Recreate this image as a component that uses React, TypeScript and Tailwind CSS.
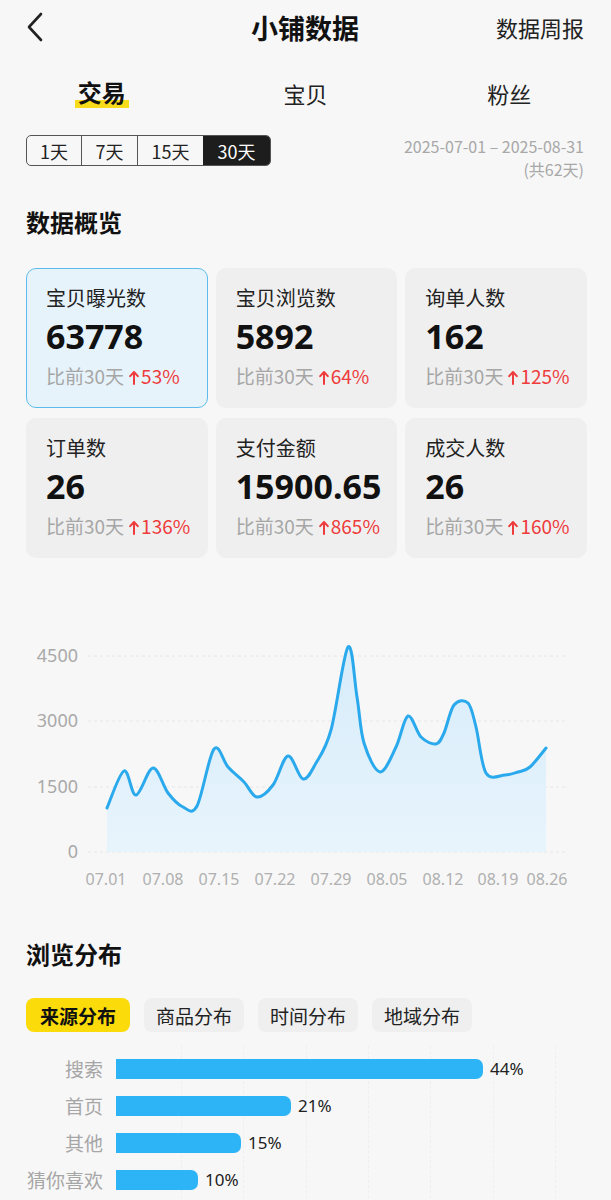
import React from "react";

const CJK = '"Noto Sans CJK SC", "Noto Sans", sans-serif';
const NUM = '"Noto Sans", "Noto Sans CJK SC", sans-serif';

const stats = [
  { label: "宝贝曝光数", value: "63778", pct: "53%", active: true },
  { label: "宝贝浏览数", value: "5892", pct: "64%" },
  { label: "询单人数", value: "162", pct: "125%" },
  { label: "订单数", value: "26", pct: "136%" },
  { label: "支付金额", value: "15900.65", pct: "865%" },
  { label: "成交人数", value: "26", pct: "160%" },
];

// points in page coordinates
const pts: [number, number][] = [
  [107, 808], [124, 771], [136, 795], [153, 768], [168, 793], [183, 807],
  [197, 806], [214, 749], [228, 767], [244, 782], [257, 797], [273, 785],
  [288, 756], [303, 779], [316, 763], [331, 730], [348, 647], [357, 697],
  [364, 743], [380, 772], [396, 747], [408, 716], [421, 737], [436, 744],
  [444, 733], [454, 705], [468, 703], [476, 727], [486, 773], [505, 775],
  [518, 772], [530, 767], [546, 748],
];

function smoothPath(p: [number, number][]) {
  let d = `M${p[0][0]},${p[0][1]}`;
  for (let i = 0; i < p.length - 1; i++) {
    const p0 = p[i - 1] || p[i];
    const p1 = p[i];
    const p2 = p[i + 1];
    const p3 = p[i + 2] || p2;
    const c1x = p1[0] + (p2[0] - p0[0]) / 6;
    const c1y = p1[1] + (p2[1] - p0[1]) / 6;
    const c2x = p2[0] - (p3[0] - p1[0]) / 6;
    const c2y = p2[1] - (p3[1] - p1[1]) / 6;
    d += ` C${c1x},${c1y} ${c2x},${c2y} ${p2[0]},${p2[1]}`;
  }
  return d;
}

const sources = [
  { label: "搜索", pct: 44, w: 367 },
  { label: "首页", pct: 21, w: 175 },
  { label: "其他", pct: 15, w: 125 },
  { label: "猜你喜欢", pct: 10, w: 82 },
];

function UpArrow() {
  return (
    <svg width="10" height="15" viewBox="0 0 10 15" className="inline-block ml-[5px] mr-[2px] mb-[2px]">
      <path
        d="M5 14 V2.5 M1.2 6.2 L5 2 L8.8 6.2"
        fill="none"
        stroke="#ee3b3b"
        strokeWidth="2"
        strokeLinecap="round"
        strokeLinejoin="round"
      />
    </svg>
  );
}

function Chart() {
  const line = smoothPath(pts);
  const area = `${line} L546,852 L107,852 Z`;
  const yTicks = [
    { v: "4500", y: 656 },
    { v: "3000", y: 721 },
    { v: "1500", y: 787 },
    { v: "0", y: 852 },
  ];
  const xTicks = [
    ["07.01", 106], ["07.08", 163], ["07.15", 219], ["07.22", 275],
    ["07.29", 331], ["08.05", 387], ["08.12", 443], ["08.19", 498], ["08.26", 547],
  ] as const;
  return (
    <svg
      className="block"
      width="611"
      height="342"
      viewBox="0 558 611 342"
      style={{ fontFamily: NUM }}
    >
      <defs>
        <linearGradient id="fill" x1="0" y1="0" x2="0" y2="1">
          <stop offset="0%" stopColor="#d6ecfa" />
          <stop offset="100%" stopColor="#e8f4fc" />
        </linearGradient>
      </defs>
      {yTicks.map((t) => (
        <g key={t.v}>
          <line
            x1="88"
            x2="567"
            y1={t.y}
            y2={t.y}
            stroke="#e6e6e6"
            strokeWidth="1"
            strokeDasharray="3 3"
          />
          <text
            x="78"
            y={t.y + 6}
            textAnchor="end"
            fontSize="18"
            fill="#a9a9a9"
          >
            {t.v}
          </text>
        </g>
      ))}
      <path d={area} fill="url(#fill)" />
      <path
        d={line}
        fill="none"
        stroke="#2aa9ec"
        strokeWidth="3"
        strokeLinecap="round"
        strokeLinejoin="round"
      />
      {xTicks.map(([t, x]) => (
        <text
          key={t}
          x={x}
          y="885"
          textAnchor="middle"
          fontSize="16"
          fill="#b0b0b0"
        >
          {t}
        </text>
      ))}
    </svg>
  );
}

export default function App() {
  return (
    <div
      className="w-[611px] min-h-[1200px] bg-[#f7f7f7] text-[#111] overflow-hidden"
      style={{ fontFamily: CJK }}
    >
      {/* header */}
      <div className="h-[54px] grid grid-cols-[1fr_auto_1fr] items-center pl-[26px] pr-[27px]">
        <svg width="18" height="30" viewBox="0 0 18 30" className="mt-[-1px]">
          <path
            d="M15 2 L3 15 L15 28"
            fill="none"
            stroke="#222"
            strokeWidth="2.6"
            strokeLinecap="round"
            strokeLinejoin="round"
          />
        </svg>
        <div className="text-[27px] font-bold leading-none">小铺数据</div>
        <div className="justify-self-end text-[22px] text-[#222] leading-none">
          数据周报
        </div>
      </div>

      {/* tabs */}
      <div className="h-[78px] grid grid-cols-3 items-center text-center">
        <div>
          <span className="relative inline-block text-[24px] font-bold leading-none">
            <span className="absolute left-[-3px] right-[-3px] bottom-[-4px] h-[8px] bg-[#f8dc1b]" />
            <span className="relative">交易</span>
          </span>
        </div>
        <div className="text-[22px] text-[#222] leading-none">宝贝</div>
        <div className="text-[22px] text-[#222] leading-none">粉丝</div>
      </div>

      {/* range */}
      <div className="mt-[3px] flex justify-between items-start pl-[26px] pr-[27px]">
        <div className="flex h-[31px] border border-[#555] rounded-[5px] overflow-hidden text-[18px] leading-none">
          <div className="w-[54px] flex items-center justify-center text-[#222]">1天</div>
          <div className="w-[56px] flex items-center justify-center border-l border-[#555] text-[#222]">7天</div>
          <div className="w-[66px] flex items-center justify-center border-l border-[#555] text-[#222]">15天</div>
          <div className="w-[67px] flex items-center justify-center bg-[#1d1d1d] text-white">30天</div>
        </div>
        <div className="text-right text-[16px] leading-[23px] text-[#a8a8a8]">
          <div>2025-07-01 – 2025-08-31</div>
          <div>(共62天)</div>
        </div>
      </div>

      {/* overview */}
      <div className="mt-[26px] pl-[26px] text-[24px] font-bold leading-[30px]">
        数据概览
      </div>
      <div className="mt-[31px] pl-[26px] pr-[24px] grid grid-cols-3 gap-x-[8px] gap-y-[10px]">
        {stats.map((s) => (
          <div
            key={s.label}
            className={
              s.active
                ? "h-[140px] rounded-[10px] border-[1.5px] border-[#5cbdec] bg-[#e6f3fb] pl-[19px] pt-[16px]"
                : "h-[140px] rounded-[10px] bg-[#efefef] pl-[20px] pt-[17px]"
            }
          >
            <div className="text-[20px] leading-[26px] text-[#222]">{s.label}</div>
            <div
              className="mt-[6px] text-[34px] font-bold leading-[38px] text-[#111]"
              style={{ fontFamily: NUM }}
            >
              {s.value}
            </div>
            <div className="mt-[9px] text-[19px] leading-[24px] text-[#a6a6a6] whitespace-nowrap">
              比前30天
              <span className="text-[#ee3b3b]">
                <UpArrow />
                {s.pct}
              </span>
            </div>
          </div>
        ))}
      </div>

      <Chart />

      {/* distribution */}
      <div className="mt-[39px] pl-[26px] text-[24px] font-bold leading-[30px]">
        浏览分布
      </div>
      <div className="mt-[29px] pl-[26px] flex gap-[14px] text-[19px] leading-none">
        <div className="h-[34px] px-[14px] rounded-[8px] bg-[#fbdc0a] font-bold flex items-center">
          来源分布
        </div>
        <div className="h-[34px] px-[12px] rounded-[8px] bg-[#efefef] text-[#222] flex items-center">
          商品分布
        </div>
        <div className="h-[34px] px-[12px] rounded-[8px] bg-[#efefef] text-[#222] flex items-center">
          时间分布
        </div>
        <div className="h-[34px] px-[12px] rounded-[8px] bg-[#efefef] text-[#222] flex items-center">
          地域分布
        </div>
      </div>

      <div className="relative mt-[14px] pt-[4px]">
        <div className="absolute inset-0 left-[181px] w-[375px] flex justify-between pointer-events-none">
          {[0, 1, 2, 3, 4, 5, 6].map((i) => (
            <div key={i} className="w-0 h-full border-l border-dashed border-[#efefef]" />
          ))}
        </div>
        {sources.map((s) => (
          <div key={s.label} className="relative h-[37px] flex items-center">
            <div className="w-[104px] pr-[1px] text-right text-[19px] leading-none text-[#a6a6a6]">
              {s.label}
            </div>
            <div
              className="ml-[12px] h-[20px] rounded-r-[7px] bg-[#2db4f6]"
              style={{ width: s.w }}
            />
            <div
              className="ml-[7px] text-[17px] leading-none text-[#222]"
              style={{ fontFamily: NUM }}
            >
              {s.pct}%
            </div>
          </div>
        ))}
      </div>
    </div>
  );
}
